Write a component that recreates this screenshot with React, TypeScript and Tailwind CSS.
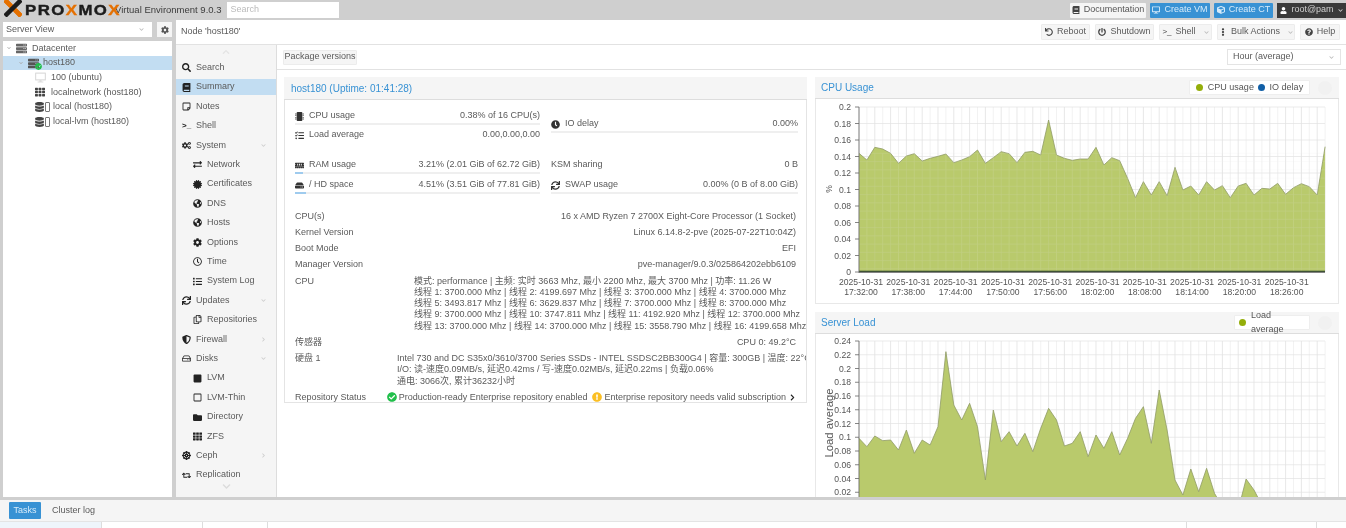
import type { ReactNode } from "react";
import {
  FaBook,
  FaCertificate,
  FaCheckCircle,
  FaChevronDown,
  FaChevronRight,
  FaChevronUp,
  FaClock,
  FaCog,
  FaCogs,
  FaCube,
  FaDatabase,
  FaDesktop,
  FaDharmachakra,
  FaEllipsisV,
  FaExchangeAlt,
  FaExclamationCircle,
  FaFolder,
  FaGlobeAmericas,
  FaHdd,
  FaList,
  FaMemory,
  FaMicrochip,
  FaPowerOff,
  FaQuestionCircle,
  FaRegClock,
  FaRegCopy,
  FaRegHdd,
  FaRegSquare,
  FaRegStickyNote,
  FaRetweet,
  FaSearch,
  FaServer,
  FaShieldAlt,
  FaSquare,
  FaSync,
  FaTasks,
  FaTh,
  FaUndo,
  FaUser,
} from "react-icons/fa";

const cpuData = [
  235, 255, 217, 222, 235, 265, 243, 236, 258, 250, 244, 237, 263, 255, 245, 225, 265, 248, 230, 236,
  263, 232, 229, 240, 135, 240, 250, 256, 252, 252, 217, 270, 248, 257, 310, 368, 320, 360, 320, 362,
  277, 345, 333, 360, 320, 345, 332, 368, 333, 325, 360, 340, 342, 325, 358, 338, 326, 335, 360, 215,
];

const loadData = [
  385, 410, 378, 392, 390, 420, 360, 430, 390, 405, 350, 125, 285, 330, 280, 350, 510, 300, 395, 365,
  408, 370, 425, 355, 295, 330, 408, 400, 365, 440, 375, 415, 365, 435, 385, 325, 290, 400, 240, 360,
  510, 555, 477, 545, 475, 550, 590, 600, 600, 507, 540, 585, 640, 640, 640, 640, 640, 640, 640, 640,
];

const timeLabels = ["17:32:00", "17:38:00", "17:44:00", "17:50:00", "17:56:00", "18:02:00", "18:08:00", "18:14:00", "18:20:00", "18:26:00"];

const navItems: { label: string; icon: ReactNode; sub?: boolean; arrow?: "down" | "right"; active?: boolean }[] = [
  { label: "Search", icon: <FaSearch /> },
  { label: "Summary", icon: <FaBook />, active: true },
  { label: "Notes", icon: <FaRegStickyNote /> },
  { label: ">_", icon: null },
  { label: "System", icon: <FaCogs />, arrow: "down" },
  { label: "Network", icon: <FaExchangeAlt />, sub: true },
  { label: "Certificates", icon: <FaCertificate />, sub: true },
  { label: "DNS", icon: <FaGlobeAmericas />, sub: true },
  { label: "Hosts", icon: <FaGlobeAmericas />, sub: true },
  { label: "Options", icon: <FaCog />, sub: true },
  { label: "Time", icon: <FaRegClock />, sub: true },
  { label: "System Log", icon: <FaList />, sub: true },
  { label: "Updates", icon: <FaSync />, arrow: "down" },
  { label: "Repositories", icon: <FaRegCopy />, sub: true },
  { label: "Firewall", icon: <FaShieldAlt />, arrow: "right" },
  { label: "Disks", icon: <FaRegHdd />, arrow: "down" },
  { label: "LVM", icon: <FaSquare />, sub: true },
  { label: "LVM-Thin", icon: <FaRegSquare />, sub: true },
  { label: "Directory", icon: <FaFolder />, sub: true },
  { label: "ZFS", icon: <FaTh />, sub: true },
  { label: "Ceph", icon: <FaDharmachakra />, arrow: "right" },
  { label: "Replication", icon: <FaRetweet /> },
];

function Logo() {
  return (
    <div className="flex h-5 w-[113px] shrink-0 items-center">
      <svg viewBox="0 0 18 18" className="ml-1 h-[18px] w-[18px] shrink-0 -translate-y-0.5">
        <path d="M1 1 L17 17" stroke="#e57000" strokeWidth="4.5" />
        <path d="M17 1 L1 17" stroke="#1c1c1c" strokeWidth="4.5" />
        <path d="M1 1 L7 7 M17 17 L11 11" stroke="#e57000" strokeWidth="4.5" />
      </svg>
      <div className="ml-[3px] origin-left scale-x-[1.2] text-[14px] font-bold tracking-[1.2px] text-[#1c1c1c] [-webkit-text-stroke:0.4px_#1c1c1c]">
        PRO<span className="text-[#e57000] [-webkit-text-stroke:0.4px_#e57000]">X</span>MO
        <span className="text-[#e57000] [-webkit-text-stroke:0.4px_#e57000]">X</span>
      </div>
    </div>
  );
}

function TopButton({ icon, label, className }: { icon: ReactNode; label: string; className: string }) {
  return (
    <div className={`flex h-[15px] items-center justify-center gap-1 rounded-[1px] ${className}`}>
      <span className="text-[8px]">{icon}</span>
      {label}
    </div>
  );
}

function ToolButton({ icon, label, width, caret }: { icon: ReactNode; label: string; width: string; caret?: boolean }) {
  return (
    <div className={`flex h-4 items-center justify-center gap-1 rounded-[1px] border border-[#ececec] bg-[#f5f5f5] ${width}`}>
      <span className="text-[8px] text-[#444]">{icon}</span>
      {label}
      {caret && <FaChevronDown className="ml-1 text-[5px] text-[#bbb]" />}
    </div>
  );
}

function TreeRow({ indent, icon, label, active, caret }: { indent: string; icon: ReactNode; label: string; active?: boolean; caret?: boolean }) {
  return (
    <div className={`flex h-[14.7px] items-center ${indent} ${active ? "bg-[#c2ddf2]" : ""}`}>
      {caret && <FaChevronDown className="mr-[5px] text-[4px] text-[#aaa]" />}
      {icon}
      <span className="whitespace-nowrap">{label}</span>
    </div>
  );
}

function Sidebar() {
  return (
    <div className="flex w-[101px] shrink-0 flex-col border-r border-[#ddd] bg-[#f5f5f5]">
      <div className="flex h-[13px] items-center justify-center">
        <FaChevronUp className="text-[8px] text-[#e4e4e4]" />
      </div>
      <div className="h-[420px] overflow-hidden">
        {navItems.map((item) => (
          <div key={item.label} className="flex h-[19.42px] items-center">
            <div className={`flex h-4 w-full items-center ${item.active ? "bg-[#c2ddf2]" : ""} ${item.sub ? "pl-[17px]" : "pl-1.5"}`}>
              {item.label === ">_" ? (
                <>
                  <span className="w-[14px] shrink-0 text-[8px] font-bold text-[#222]">{">_"}</span>
                  <span>Shell</span>
                </>
              ) : (
                <>
                  <span className="w-[14px] shrink-0 text-[9px] text-[#222]">{item.icon}</span>
                  <span>{item.label}</span>
                </>
              )}
              {item.arrow === "down" && <FaChevronDown className="mr-2.5 ml-auto text-[5px] text-[#ccc]" />}
              {item.arrow === "right" && <FaChevronRight className="mr-2.5 ml-auto text-[5px] text-[#ccc]" />}
            </div>
          </div>
        ))}
      </div>
      <div className="flex h-[17px] items-center justify-center">
        <FaChevronDown className="text-[9px] text-[#dcdcdc]" />
      </div>
    </div>
  );
}

function UsageRow({ icon, label, value, fill, className }: { icon?: ReactNode; label: string; value: string; fill?: string; className?: string }) {
  return (
    <div className={className}>
      <div className="flex h-3.5 items-center justify-between whitespace-nowrap">
        <div className="flex items-center">
          {icon && <span className="mr-[5px] text-[9px] text-[#333]">{icon}</span>}
          {label}
        </div>
        <div>{value}</div>
      </div>
      {fill !== undefined && (
        <div className="h-0.5 bg-[#efefef]">
          <div className={`h-full bg-[#9fcbee] ${fill}`} />
        </div>
      )}
    </div>
  );
}

function InfoRow({ label, value }: { label: string; value: string }) {
  return (
    <div className="flex h-4 items-center justify-between whitespace-nowrap">
      <span>{label}</span>
      <span>{value}</span>
    </div>
  );
}

function StatusPanel() {
  return (
    <div className="w-[523px] shrink-0">
      <div className="flex h-[23px] items-center border-b border-[#ddd] bg-[#f5f5f5] pl-[7px] text-[10px] text-[#3892d4]">
        host180 (Uptime: 01:41:28)
      </div>
      <div className="h-[303px] overflow-hidden border-x border-b border-[#e4e4e4] bg-white px-[10px] pt-[9px]">
        <div className="grid grid-cols-[245px_247px] gap-x-[11px]">
          <div>
            <UsageRow icon={<FaMicrochip />} label="CPU usage" value="0.38% of 16 CPU(s)" fill="w-0" />
            <UsageRow className="mt-[3px]" icon={<FaTasks />} label="Load average" value="0.00,0.00,0.00" />
          </div>
          <div className="pt-2">
            <UsageRow icon={<FaClock />} label="IO delay" value="0.00%" fill="w-0" />
          </div>
        </div>
        <div className="mt-4 grid grid-cols-[245px_247px] gap-x-[11px]">
          <div>
            <UsageRow icon={<FaMemory />} label="RAM usage" value="3.21% (2.01 GiB of 62.72 GiB)" fill="w-[3.2%]" />
            <UsageRow className="mt-1" icon={<FaHdd />} label="/ HD space" value="4.51% (3.51 GiB of 77.81 GiB)" fill="w-[4.5%]" />
          </div>
          <div>
            <div className="h-4">
              <UsageRow label="KSM sharing" value="0 B" />
            </div>
            <UsageRow className="mt-1" icon={<FaSync />} label="SWAP usage" value="0.00% (0 B of 8.00 GiB)" fill="w-0" />
          </div>
        </div>
        <div className="mt-[15px]">
          <InfoRow label="CPU(s)" value="16 x AMD Ryzen 7 2700X Eight-Core Processor (1 Socket)" />
          <InfoRow label="Kernel Version" value="Linux 6.14.8-2-pve (2025-07-22T10:04Z)" />
          <InfoRow label="Boot Mode" value="EFI" />
          <InfoRow label="Manager Version" value="pve-manager/9.0.3/025864202ebb6109" />
        </div>
        <div className="mt-[2.5px] flex justify-between leading-[11.3px] whitespace-nowrap">
          <span>CPU</span>
          <div className="w-[382px]">
            <div>模式: performance | 主频: 实时 3663 Mhz, 最小 2200 Mhz, 最大 3700 Mhz | 功率: 11.26 W</div>
            <div>线程 1: 3700.000 Mhz | 线程 2: 4199.697 Mhz | 线程 3: 3700.000 Mhz | 线程 4: 3700.000 Mhz</div>
            <div>线程 5: 3493.817 Mhz | 线程 6: 3629.837 Mhz | 线程 7: 3700.000 Mhz | 线程 8: 3700.000 Mhz</div>
            <div>线程 9: 3700.000 Mhz | 线程 10: 3747.811 Mhz | 线程 11: 4192.920 Mhz | 线程 12: 3700.000 Mhz</div>
            <div>线程 13: 3700.000 Mhz | 线程 14: 3700.000 Mhz | 线程 15: 3558.790 Mhz | 线程 16: 4199.658 Mhz</div>
          </div>
        </div>
        <div className="mt-[2.5px]">
          <InfoRow label="传感器" value="CPU 0: 49.2°C" />
        </div>
        <div className="mt-[2.5px] flex justify-between leading-[11.3px] whitespace-nowrap">
          <span>硬盘 1</span>
          <div className="w-[399px]">
            <div>Intel 730 and DC S35x0/3610/3700 Series SSDs - INTEL SSDSC2BB300G4 | 容量: 300GB | 温度: 22°C</div>
            <div>I/O: 读-速度0.09MB/s, 延迟0.42ms / 写-速度0.02MB/s, 延迟0.22ms | 负载0.06%</div>
            <div>通电: 3066次, 累计36232小时</div>
          </div>
        </div>
        <div className="mt-[2.5px] flex h-4 items-center justify-between whitespace-nowrap">
          <span>Repository Status</span>
          <div className="flex items-center">
            <FaCheckCircle className="mr-[2px] text-[10px] text-[#21bf4b]" />
            <span>Production-ready Enterprise repository enabled</span>
            <FaExclamationCircle className="mr-[2px] ml-[5px] text-[10px] text-[#fbbf24]" />
            <span>Enterprise repository needs valid subscription</span>
            <FaChevronRight className="ml-[3px] text-[7px] text-[#222]" />
          </div>
        </div>
      </div>
    </div>
  );
}

function Legend({ items, width }: { items: { label: string; color: string }[]; width: string }) {
  return (
    <div className="ml-auto flex items-center gap-2">
      <div className={`flex h-[15px] items-center justify-around rounded-[1px] border border-[#eee] bg-white px-1 ${width}`}>
        {items.map((item) => (
          <div key={item.label} className="flex items-center gap-[5px]">
            <span className={`h-[7px] w-[7px] rounded-full ${item.color}`} />
            {item.label}
          </div>
        ))}
      </div>
      <div className="mr-[7px] h-3.5 w-3.5 rounded-full bg-[#f1f1f1]" />
    </div>
  );
}

function ChartGrid({ top, bottom, step }: { top: number; bottom: number; step: number }) {
  const vertical = Array.from({ length: 60 }, (_, i) => 859 + i * 7.9);
  const horizontal: number[] = [];
  for (let y = top; y < bottom + 0.5; y += step) horizontal.push(y);
  return (
    <g>
      {vertical.map((x, i) => (
        <line key={x} x1={x} x2={x} y1={top} y2={bottom} stroke={i % 2 ? "#ededed" : "#dedede"} strokeWidth="0.7" />
      ))}
      {horizontal.map((y) => (
        <line key={y} x1={859} x2={1325} y1={y} y2={y} stroke="#e2e2e2" strokeWidth="0.7" />
      ))}
    </g>
  );
}

function CpuChart() {
  const ys = cpuData.map((v) => 75 + v / 3);
  const points = ys.map((y, i) => `${859 + i * 7.9},${y}`).join(" ");
  const yLabels = ["0.2", "0.18", "0.16", "0.14", "0.12", "0.1", "0.08", "0.06", "0.04", "0.02", "0"];
  return (
    <svg viewBox="816 99 524 204" className="block h-[204px] w-[524px]">
      <ChartGrid top={107} bottom={272} step={16.5} />
      <polygon points={`859,272 ${points} 1325,272`} fill="#b9ca6c" />
      <polyline points={points} fill="none" stroke="#8f9a66" strokeWidth="0.8" />
      <g opacity="0.18">
        <ChartGrid top={ys[0]} bottom={272} step={8.25} />
      </g>
      <rect x={859} y={270.7} width={466} height={1.3} fill="#3e5236" />
      <line x1={859} x2={859} y1={107} y2={273} stroke="#666" strokeWidth="0.8" />
      <line x1={859} x2={1325} y1={272.5} y2={272.5} stroke="#666" strokeWidth="0.8" />
      {yLabels.map((t, i) => (
        <g key={t}>
          <line x1={855} x2={859} y1={107 + i * 16.5} y2={107 + i * 16.5} stroke="#666" strokeWidth="0.8" />
          <text x={851} y={110 + i * 16.5} textAnchor="end" fontSize="8.6" fill="#555">{t}</text>
        </g>
      ))}
      {timeLabels.map((t, i) => (
        <g key={t} fontSize="8.6" fill="#555" textAnchor="middle">
          <text x={861 + i * 47.3} y={285}>2025-10-31</text>
          <text x={861 + i * 47.3} y={295}>{t}</text>
        </g>
      ))}
      <text x={0} y={0} fontSize="8.6" fill="#555" textAnchor="middle" transform="translate(832 189) rotate(-90)">%</text>
    </svg>
  );
}

function LoadChart() {
  const ys = loadData.map((v) => 310 + v / 3);
  const points = ys.map((y, i) => `${859 + i * 7.9},${y}`).join(" ");
  const yLabels = ["0.24", "0.22", "0.2", "0.18", "0.16", "0.14", "0.12", "0.1", "0.08", "0.06", "0.04", "0.02"];
  return (
    <svg viewBox="816 334 524 164" className="block h-[164px] w-[524px]">
      <ChartGrid top={341} bottom={506} step={13.75} />
      <polygon points={`859,506 ${points} 1325,506`} fill="#b9ca6c" />
      <polyline points={points} fill="none" stroke="#8f9a66" strokeWidth="0.8" />
      <line x1={859} x2={859} y1={341} y2={506} stroke="#666" strokeWidth="0.8" />
      {yLabels.map((t, i) => (
        <g key={t}>
          <line x1={855} x2={859} y1={341 + i * 13.75} y2={341 + i * 13.75} stroke="#666" strokeWidth="0.8" />
          <text x={851} y={344 + i * 13.75} textAnchor="end" fontSize="8.6" fill="#555">{t}</text>
        </g>
      ))}
      <text x={0} y={0} fontSize="11.3" fill="#555" textAnchor="middle" transform="translate(833 423) rotate(-90)">Load average</text>
    </svg>
  );
}

function ChartHeader({ title, legend }: { title: string; legend: ReactNode }) {
  return (
    <div className="flex h-[22px] items-center border-b border-[#ddd] bg-[#f5f5f5] pl-1.5 text-[#555]">
      <span className="text-[10px] text-[#3892d4]">{title}</span>
      {legend}
    </div>
  );
}

function ChartPanels() {
  return (
    <div className="w-[524px] shrink-0">
      <ChartHeader
        title="CPU Usage"
        legend={
          <Legend
            width="w-[121px]"
            items={[
              { label: "CPU usage", color: "bg-[#94ae0a]" },
              { label: "IO delay", color: "bg-[#115fa6]" },
            ]}
          />
        }
      />
      <div className="border-x border-b border-[#e8e8e8] bg-white">
        <CpuChart />
      </div>
      <div className="mt-2">
        <ChartHeader title="Server Load" legend={<Legend width="w-[76px]" items={[{ label: "Load average", color: "bg-[#94ae0a]" }]} />} />
        <CpuSpacer />
      </div>
    </div>
  );
}

function CpuSpacer() {
  return (
    <div className="border-x border-[#e8e8e8] bg-white">
      <LoadChart />
    </div>
  );
}

export default function App() {
  return (
    <div className="flex h-[528px] w-[1346px] flex-col overflow-hidden bg-[#cfcfcf] text-[9px] text-[#5a5a5a] blur-[0.45px] [font-family:'Liberation_Sans','Noto_Sans_CJK_SC',sans-serif]">
      <header className="flex h-5 shrink-0 items-center">
        <Logo />
        <span className="ml-[2px] text-[9.5px] whitespace-nowrap text-[#3c3c3c]">Virtual Environment 9.0.3</span>
        <div className="ml-[5px] flex h-4 w-[112px] items-center bg-white pl-1 text-[#bbb]">Search</div>
        <div className="ml-auto flex gap-1">
          <TopButton icon={<FaBook className="text-[#444]" />} label="Documentation" className="w-[76px] bg-[#f5f5f5] text-[#555]" />
          <TopButton icon={<FaDesktop />} label="Create VM" className="w-[60px] bg-[#3892d4] text-[#d6ebfa]" />
          <TopButton icon={<FaCube />} label="Create CT" className="w-[59px] bg-[#3892d4] text-[#d6ebfa]" />
          <div className="flex h-[15px] w-[69px] items-center justify-center gap-1 bg-[#3a3a3a] text-[#d0d0d0]">
            <FaUser className="text-[7px] text-white" />
            root@pam
            <FaChevronDown className="text-[5px]" />
          </div>
        </div>
      </header>

      <div className="flex h-[477px] shrink-0">
        <aside className="ml-[3px] flex w-[169px] shrink-0 flex-col">
          <div className="flex h-[21px] shrink-0 items-start pt-0.5">
            <div className="flex h-[15px] w-[149px] items-center justify-between bg-white pr-2 pl-[3px]">
              Server View
              <FaChevronDown className="text-[5px] text-[#bbb]" />
            </div>
            <div className="ml-[5px] flex h-[15px] w-[15px] items-center justify-center bg-[#f5f5f5]">
              <FaCog className="text-[8px] text-[#555]" />
            </div>
          </div>
          <div className="flex-1 bg-white">
            <TreeRow
              indent="pl-1"
              caret
              icon={<FaServer className="mr-[5px] h-[11px] w-[11px] text-[#666]" />}
              label="Datacenter"
            />
            <TreeRow
              indent="pl-[16px]"
              active
              caret
              icon={
                <span className="relative mr-[3px] inline-block h-[11px] w-[12px]">
                  <FaServer className="h-[11px] w-[11px] text-[#555]" />
                  <FaCheckCircle className="absolute right-[-2px] bottom-[-1px] h-[7px] w-[7px] text-[#21bf4b]" />
                </span>
              }
              label="host180"
            />
            <TreeRow indent="pl-[32px]" icon={<FaDesktop className="mr-[5px] h-[11px] w-[11px] text-[#ddd]" />} label="100 (ubuntu)" />
            <TreeRow indent="pl-[32px]" icon={<FaTh className="mr-[6px] h-[10px] w-[10px] text-[#444]" />} label="localnetwork (host180)" />
            <TreeRow
              indent="pl-[32px]"
              icon={
                <span className="mr-[3px] flex items-center gap-px">
                  <FaDatabase className="h-[10px] w-[9px] text-[#444]" />
                  <span className="h-[10px] w-[5px] rounded-[1px] border border-[#777]" />
                </span>
              }
              label="local (host180)"
            />
            <TreeRow
              indent="pl-[32px]"
              icon={
                <span className="mr-[3px] flex items-center gap-px">
                  <FaDatabase className="h-[10px] w-[9px] text-[#444]" />
                  <span className="h-[10px] w-[5px] rounded-[1px] border border-[#777]" />
                </span>
              }
              label="local-lvm (host180)"
            />
          </div>
        </aside>

        <main className="ml-1 flex min-w-0 flex-1 flex-col overflow-hidden bg-white">
          <div className="flex h-[25px] shrink-0 items-center border-b border-[#e2e2e2] pr-1.5 pl-[5px]">
            <span>Node 'host180'</span>
            <div className="ml-auto flex gap-[5px]">
              <ToolButton icon={<FaUndo />} label="Reboot" width="w-[49px]" />
              <ToolButton icon={<FaPowerOff />} label="Shutdown" width="w-[59px]" />
              <ToolButton icon={">_"} label="Shell" width="w-[53px]" caret />
              <ToolButton icon={<FaEllipsisV />} label="Bulk Actions" width="w-[78px]" caret />
              <ToolButton icon={<FaQuestionCircle />} label="Help" width="w-[40px]" />
            </div>
          </div>
          <div className="flex min-h-0 flex-1">
            <Sidebar />
            <div className="flex min-w-0 flex-1 flex-col">
              <div className="flex h-[25px] shrink-0 items-center justify-between border-b border-[#e2e2e2] pr-[5px] pl-1.5">
                <div className="flex h-[15px] w-[74px] items-center justify-center rounded-[1px] border border-[#ececec] bg-[#f5f5f5]">
                  Package versions
                </div>
                <div className="flex h-4 w-[114px] items-center justify-between border border-[#e4e4e4] bg-white pr-1.5 pl-[5px]">
                  Hour (average)
                  <FaChevronDown className="text-[5px] text-[#bbb]" />
                </div>
              </div>
              <div className="flex min-h-0 flex-1 gap-2 overflow-hidden pt-[7px] pl-[7px]">
                <StatusPanel />
                <ChartPanels />
              </div>
            </div>
          </div>
        </main>
      </div>

      <div className="flex h-[22px] shrink-0 items-center border-b border-[#e4e4e4] bg-[#f5f5f5] pl-[9px] mt-[3px]">
        <div className="flex h-[17px] w-8 items-center justify-center rounded-[1px] bg-[#3892d4] text-[#d6ebfa]">Tasks</div>
        <span className="ml-[11px]">Cluster log</span>
      </div>
      <div className="flex flex-1 bg-white">
        <div className="w-[102px] border-r border-[#ddd] bg-[#eef5fb]" />
        <div className="w-[101px] border-r border-[#ddd]" />
        <div className="w-[65px] border-r border-[#ddd]" />
        <div className="w-[919px] border-r border-[#ddd]" />
        <div className="w-[130px] border-r border-[#ddd]" />
      </div>
    </div>
  );
}
